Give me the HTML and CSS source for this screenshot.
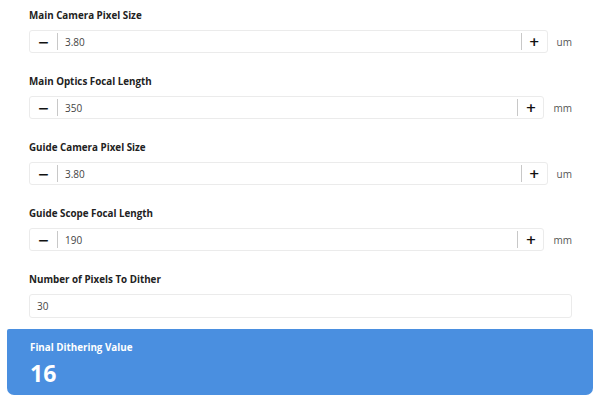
FILE: index.html
```html
<!DOCTYPE html>
<html lang="en">
<head>
    <title>Dithering Calculator</title>
    <meta charset="UTF-8" />
    <link rel="stylesheet" href="styles.css">
</head>
<body>
    <div class="fields">
        <div class="field">
            <label>Main Camera Pixel Size</label>
            <div class="row">
                <div class="stepper">
                    <button class="minus">&minus;</button>
                    <input type="text" value="3.80">
                    <button class="plus">+</button>
                </div>
                <span class="unit">um</span>
            </div>
        </div>
        <div class="field">
            <label>Main Optics Focal Length</label>
            <div class="row">
                <div class="stepper">
                    <button class="minus">&minus;</button>
                    <input type="text" value="350">
                    <button class="plus">+</button>
                </div>
                <span class="unit">mm</span>
            </div>
        </div>
        <div class="field">
            <label>Guide Camera Pixel Size</label>
            <div class="row">
                <div class="stepper">
                    <button class="minus">&minus;</button>
                    <input type="text" value="3.80">
                    <button class="plus">+</button>
                </div>
                <span class="unit">um</span>
            </div>
        </div>
        <div class="field">
            <label>Guide Scope Focal Length</label>
            <div class="row">
                <div class="stepper">
                    <button class="minus">&minus;</button>
                    <input type="text" value="190">
                    <button class="plus">+</button>
                </div>
                <span class="unit">mm</span>
            </div>
        </div>
        <div class="field last">
            <label>Number of Pixels To Dither</label>
            <input class="plain" type="text" value="30">
        </div>
    </div>

    <div class="result">
        <div class="result-label">Final Dithering Value</div>
        <div class="result-value">16</div>
    </div>
</body>
</html>
```

FILE: styles.css
```css
body {
    font-family: "Open Sans", "Noto Sans", sans-serif;
    margin: 0;
    background: #fff;
    color: #333;
}
.fields {
    padding: 8px 28px 0 29px;
}
.field {
    margin-bottom: 21px;
}
.field.last {
    margin-bottom: 0;
}
.field label {
    display: block;
    font-size: 9.8px;
    font-weight: 700;
    line-height: 15px;
    color: #222;
    margin-bottom: 7px;
}
.row {
    display: flex;
    align-items: center;
}
.stepper {
    flex: 1;
    display: flex;
    height: 23px;
    box-sizing: border-box;
    border: 1px solid #ebebeb;
    border-radius: 3px;
    background: #fff;
}
.stepper button {
    width: 28px;
    border: none;
    background: none;
    font-family: "DejaVu Sans", sans-serif;
    font-weight: 700;
    font-size: 14px;
    color: #111;
    padding: 0;
    margin: 2px 0;
    line-height: 1;
}
.stepper .minus {
    border-right: 1px solid #c8c8c8;
}
.stepper .plus {
    border-left: 1px solid #c8c8c8;
    width: 26px;
    font-size: 13px;
}
.stepper input {
    flex: 1;
    min-width: 0;
    border: none;
    outline: none;
    padding: 0 0 0 7px;
    font-family: inherit;
    font-size: 10px;
    color: #444;
}
.unit {
    font-size: 10px;
    color: #555;
    margin-left: 9px;
}
input.plain {
    display: block;
    width: 100%;
    box-sizing: border-box;
    height: 24px;
    border: 1px solid #ebebeb;
    border-radius: 3px;
    padding: 0 0 0 7px;
    font-family: inherit;
    font-size: 10px;
    color: #444;
    outline: none;
}
.result {
    margin: 11px 7px 0;
    padding: 12px 23px 7px;
    background: #4a8fe0;
    border-radius: 2px 2px 7px 7px;
    color: #fff;
}
.result-label {
    font-size: 9.8px;
    font-weight: 700;
    line-height: 14px;
}
.result-value {
    font-size: 23px;
    font-weight: 700;
    line-height: 30px;
    margin-top: 3px;
}
```
